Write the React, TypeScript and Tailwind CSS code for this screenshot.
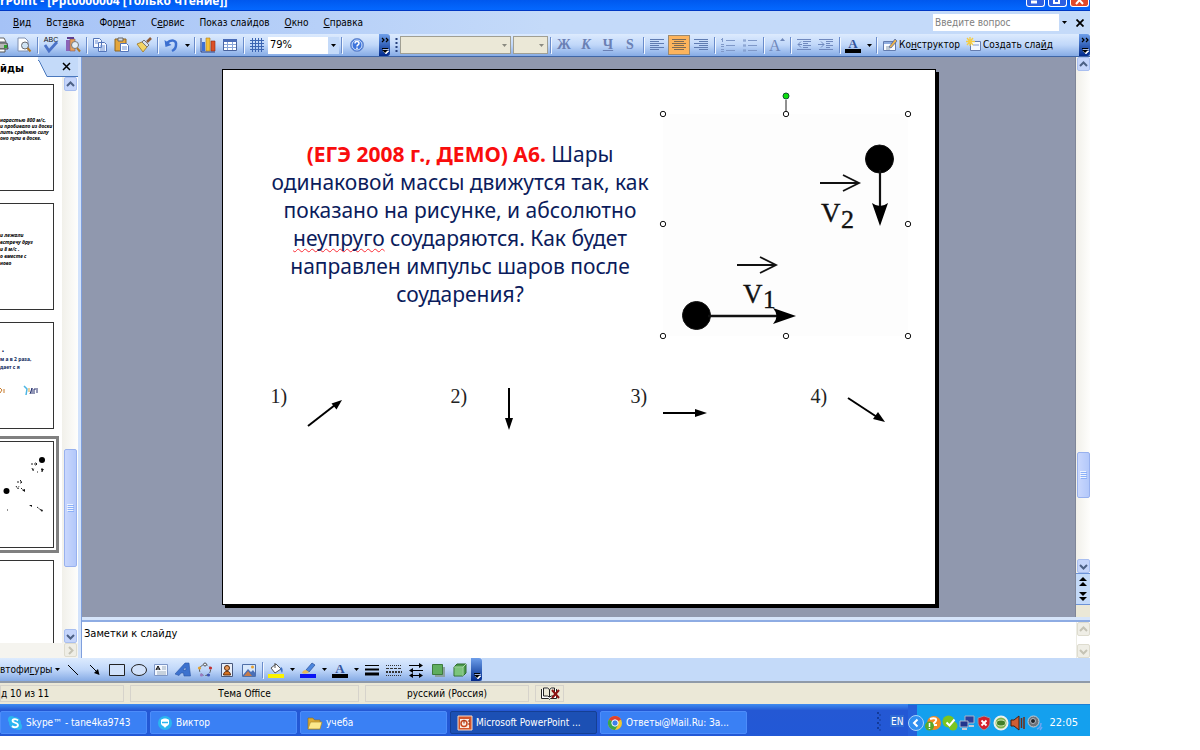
import type { ReactNode } from 'react';
import clsx from 'clsx';

const menuItems = [
    ['', 'В', 'ид'],
    ['Вст', 'а', 'вка'],
    ['Фор', 'м', 'ат'],
    ['С', 'е', 'рвис'],
    ['Показ слай', 'д', 'ов'],
    ['', 'О', 'кно'],
    ['', 'С', 'правка'],
];

const Icon = ({ children, size = 16 }: { children: ReactNode; size?: number }) => (
    <svg width={size} height={size} viewBox="0 0 16 16" fill="none" className="shrink-0" aria-hidden="true">
        {children}
    </svg>
);

const ToolButton = ({ label, active = false, children }: { label: string; active?: boolean; children: ReactNode }) => (
    <button
        aria-label={label}
        className={clsx(
            'flex h-5 w-[22px] shrink-0 items-center justify-center',
            active && 'border border-[#9c8a70] bg-[#fdb45c]'
        )}
    >
        {children}
    </button>
);

const Divider = () => (
    <span className="flex h-4 w-[5px] shrink-0 justify-center">
        <span className="w-px bg-[#6a8ccb] shadow-[1px_1px_0_#f1f7ff]" />
    </span>
);

const Caret = ({ label }: { label: string }) => (
    <button aria-label={label} className="flex h-5 w-[10px] shrink-0 items-center justify-center">
        <svg width="5" height="3" viewBox="0 0 5 3" aria-hidden="true"><path d="M0 0h5L2.5 3z" fill="#000" /></svg>
    </button>
);

const BarEnd = ({ double = false }: { double?: boolean }) => (
    <button aria-label="Параметры панели" className="flex w-[11px] shrink-0 flex-col items-center justify-end self-stretch rounded-r-[3px] bg-linear-to-b from-[#6f9fea] to-[#03298c] pb-[2px]">
        <svg width="8" height="18" viewBox="0 0 8 18" aria-hidden="true">
            {double && <path d="M1 2l2 2-2 2M5 2l2 2-2 2" stroke="#000" strokeWidth="1.2" fill="none" />}
            <path d="M2 13.500h6M2 15h6l-3 3z" stroke="#fff" strokeWidth=".6" fill="#fff" />
            <path d="M1 12.500h6" stroke="#000" />
            <path d="M1 14h6l-3 3z" fill="#000" />
        </svg>
    </button>
);

const ArrowBox = ({ dir, off = false }: { dir: 'up' | 'down' | 'right'; off?: boolean }) => (
    <button
        aria-label={dir}
        className={clsx(
            'flex h-[14px] w-[13px] shrink-0 items-center justify-center rounded-[2px] border',
            off ? 'border-[#dedccf] bg-[#efeee6]' : 'border-[#a9bff0] bg-[#c5d5fb]'
        )}
    >
        <svg width="9" height="9" viewBox="0 0 9 9" fill="none" aria-hidden="true">
            <path
                d={dir === 'up' ? 'M1 6l3.500-3.500L8 6' : dir === 'down' ? 'M1 3l3.500 3.500L8 3' : 'M3 1l3.500 3.500L3 8'}
                stroke={off ? '#c5c3b5' : '#4d6185'}
                strokeWidth="2"
            />
        </svg>
    </button>
);

const ScrollThumb = ({ className }: { className: string }) => (
    <div className={clsx('flex w-[13px] items-center justify-center rounded-[2px] border border-[#98b1ee] bg-linear-to-r from-[#c9d7fd] to-[#b3c8fa]', className)}>
        <svg width="7" height="8" viewBox="0 0 7 8" aria-hidden="true"><path d="M0 .5h6M0 2.500h6M0 4.500h6M0 6.500h6" stroke="#eef4fe" /><path d="M1 1.500h6M1 3.500h6M1 5.500h6M1 7.500h6" stroke="#8cb0f8" /></svg>
    </div>
);

const Lines = ({ d, color = '#5f7cb2' }: { d: string; color?: string }) => (
    <Icon><path d={d} stroke={color} /></Icon>
);

const ColorA = () => (
    <Icon>
        <text x="8" y="11" textAnchor="middle" fontSize="13" fontWeight="bold" fontFamily="Liberation Serif" fill="#33539b">A</text>
        <path d="M0 12h16v4H0z" fill="#000" />
    </Icon>
);

function TitleBar() {
    return (
        <header className="flex h-[11px] items-end overflow-hidden border-b border-[#0038c4] bg-linear-to-b from-[#0058ee] to-[#0468ff]">
            <h1 className="flex-1 pb-[2px] font-['Open_Sans',sans-serif] text-[12px] leading-[14px] font-bold whitespace-nowrap text-white">
                rPoint - [Ppt0000004 [Только чтение]]
            </h1>
            <div className="flex gap-[3px] self-start pr-px">
                {['Свернуть', 'Развернуть', 'Закрыть'].map((label, i) => (
                    <button
                        key={label}
                        aria-label={label}
                        className={clsx(
                            'flex h-[7px] w-[19px] justify-center rounded-b-[3px] border border-t-0 border-white',
                            i === 2 ? 'bg-[#e0492a]' : 'bg-[#2c5fe0]'
                        )}
                    >
                        <svg width="11" height="5" viewBox="0 0 11 5" fill="none" stroke="#fff" strokeWidth="2" aria-hidden="true">
                            {i === 0 && <path d="M1 2h6" strokeWidth="3" />}
                            {i === 1 && <path d="M2 0v3h5V0" />}
                            {i === 2 && <path d="M2 4l3.500-4L9 4" />}
                        </svg>
                    </button>
                ))}
            </div>
        </header>
    );
}

function MenuBar() {
    return (
        <nav className="flex h-[23px] items-center bg-linear-to-r from-[#a5c2f6] to-[#c4daf9] to-50% pl-[13px]">
            <ul className="flex flex-1 gap-[15px]">
                {menuItems.map(([before, key, after]) => (
                    <li key={before + key + after}>
                        <a href="#">{before}<u>{key}</u>{after}</a>
                    </li>
                ))}
            </ul>
            <div className="flex h-[17px] bg-white">
                <input aria-label="Вопрос" placeholder="Введите вопрос" className="w-[126px] pl-[2px] placeholder:text-[#808080]" />
                <span className="flex w-[11px] items-center bg-[#c4daf9]"><Caret label="Список вопросов" /></span>
            </div>
            <button aria-label="Закрыть окно" className="flex w-[20px] justify-center">
                <svg width="8" height="8" viewBox="0 0 8 8" aria-hidden="true"><path d="M.5.5l7 7M7.500.5l-7 7" stroke="#000" strokeWidth="1.800" /></svg>
            </button>
        </nav>
    );
}

function Toolbars() {
    return (
        <div className="flex h-[23px] border-b border-[#3f66a6] bg-[#c0d6f9]">
            <div className="flex items-center bg-linear-to-b from-[#ddebfe] via-[#c0d7f9] to-[#86abe5]">
                <button aria-label="Печать" className="flex w-[13px] justify-end overflow-hidden pr-1">
                    <Icon>
                        <path d="M3 1h8l2 4H2z" fill="#fff" stroke="#666" /><path d="M1 6h13l1 6H1z" fill="#b8b8b8" stroke="#444" /><path d="M3 12h9v3H3z" fill="#fff" stroke="#555" /><path d="M11 8h3v3h-3z" fill="#2da02d" />
                    </Icon>
                </button>
                <ToolButton label="Просмотр">
                    <Icon><path d="M2 1h7l3 3v10H2z" fill="#fff" stroke="#8090b0" /><circle cx="9" cy="8.500" r="3.500" fill="#cfe3f4" stroke="#6a6a70" /><path d="M11.500 11l3 3.500" stroke="#b07828" strokeWidth="2" /></Icon>
                </ToolButton>
                <Divider />
                <ToolButton label="Орфография">
                    <Icon><text x="8" y="5" textAnchor="middle" fontSize="7" fontFamily="Liberation Sans" fill="#111">ABC</text><path d="M2 8l4 6 8-9" stroke="#4a72c8" strokeWidth="2.800" /></Icon>
                </ToolButton>
                <ToolButton label="Справочные материалы">
                    <Icon><path d="M1 3h4v11H1z" fill="#8a62b8" /><path d="M5 2h5v12H5z" fill="#e5a05a" stroke="#8a5a60" strokeWidth=".6" /><path d="M2 1h7" stroke="#5e3f92" strokeWidth="2" /><circle cx="10" cy="8" r="3.500" fill="#e2edf6" stroke="#777" /><path d="M12 11l3 3.500" stroke="#b07828" strokeWidth="2" /></Icon>
                </ToolButton>
                <Divider />
                <ToolButton label="Копировать">
                    <Icon><path d="M1.500 1.500h6l2 2v7h-8zM6.500 5.500h6l2 2v7h-8z" fill="#f4f8ff" stroke="#5274b8" /><path d="M3 4h3M3 6h3M8 9h5M8 11h5M8 13h5" stroke="#6c90d4" /></Icon>
                </ToolButton>
                <ToolButton label="Вставить">
                    <Icon><path d="M1 2h11v12H1z" fill="#e4a63c" stroke="#8c6420" /><path d="M4 1h5v3H4z" fill="#d8dde6" stroke="#666" /><path d="M6.500 6.500h6l2 2v6h-8z" fill="#fff" stroke="#5274b8" /><path d="M8 10h5M8 12h5" stroke="#6c90d4" /></Icon>
                </ToolButton>
                <ToolButton label="Формат по образцу">
                    <Icon><path d="M1 7l5-2 5 5-4 5z" fill="#f3d465" stroke="#a8853a" /><path d="M6 5l2-2 5 5-2 2z" fill="#d9e0ec" stroke="#777" /><path d="M11 5l4-4" stroke="#8e5a35" strokeWidth="2.500" /></Icon>
                </ToolButton>
                <Divider />
                <ToolButton label="Отменить">
                    <Icon><path d="M4 6c4-4 10-3 9 2 0 3-2 5-4 6" stroke="#3c6fd0" strokeWidth="2.500" /><path d="M1.500 3l1 7 6-2z" fill="#3c6fd0" /></Icon>
                </ToolButton>
                <Caret label="Отменить список" />
                <Divider />
                <ToolButton label="Диаграмма">
                    <Icon><path d="M1 1v14h14" stroke="#2b3f85" /><path d="M2 5h3v9H2z" fill="#3c6fd8" /><path d="M6 1h4v13H6z" fill="#f2c13c" stroke="#b07a18" strokeWidth=".6" /><path d="M11 4h4v10h-4z" fill="#dd5127" stroke="#8d2c12" strokeWidth=".6" /></Icon>
                </ToolButton>
                <ToolButton label="Таблица">
                    <Icon><path d="M1.500 2.500h13v11h-13z" fill="#fff" stroke="#48629c" /><path d="M1 2h14v3H1z" fill="#4a6cb8" /><path d="M2 7.500h12M2 10.500h12M5.500 5v8M10.500 5v8" stroke="#8aa6d8" /></Icon>
                </ToolButton>
                <Divider />
                <ToolButton label="Сетка">
                    <Lines color="#3c65b2" d="M1 3.500h14M1 6.500h14M1 9.500h14M1 12.500h14M3.500 1v14M6.500 1v14M9.500 1v14M12.500 1v14" />
                </ToolButton>
                <div className="flex h-[17px] bg-white">
                    <select aria-label="Масштаб" className="w-[60px] appearance-none pl-[2px] text-[11px]"><option>79%</option></select>
                    <span className="flex w-[11px] items-center bg-[#c4daf9]"><Caret label="Масштаб список" /></span>
                </div>
                <Divider />
                <span className="w-[2px]" />
                <ToolButton label="Справка">
                    <Icon><circle cx="8" cy="8" r="6.500" fill="#3d74dc" stroke="#6f8fce" /><circle cx="8" cy="8" r="5" stroke="#dce9fc" /><path d="M6 6.500c0-3 4-2.500 4-.3C10 8 8 7.800 8 9.500M8 10.500v1.500" stroke="#fff" strokeWidth="1.500" /></Icon>
                </ToolButton>
                <span className="w-[11px]" />
                <BarEnd double />
            </div>
            <div className="flex flex-1 items-center bg-linear-to-b from-[#ddebfe] via-[#c0d7f9] to-[#86abe5]">
                <svg width="10" height="16" viewBox="0 0 10 16" className="shrink-0" aria-hidden="true"><path d="M6.500 1v15" stroke="#27417c" strokeWidth="2" strokeDasharray="2 2" /></svg>
                <div className="flex h-[18px] items-center border border-[#a09f93] bg-[#ebe8d7]">
                    <select aria-label="Шрифт" disabled className="h-4 w-[100px] appearance-none"><option></option></select>
                    <svg width="9" height="3" viewBox="0 0 9 3" aria-hidden="true"><path d="M1 0h5L3.500 3z" fill="#8a8a80" /></svg>
                </div>
                <div className="ml-[2px] flex h-[18px] items-center border border-[#a09f93] bg-[#ebe8d7]">
                    <select aria-label="Размер" disabled className="h-4 w-[24px] appearance-none"><option></option></select>
                    <svg width="9" height="3" viewBox="0 0 9 3" aria-hidden="true"><path d="M1 0h5L3.500 3z" fill="#8a8a80" /></svg>
                </div>
                <Divider />
                <div className="flex font-['Liberation_Serif',serif] text-[14px] font-bold text-[#6a80b4]">
                    <ToolButton label="Полужирный">Ж</ToolButton>
                    <ToolButton label="Курсив"><i>К</i></ToolButton>
                    <ToolButton label="Подчеркнутый"><u>Ч</u></ToolButton>
                    <ToolButton label="Тень">S</ToolButton>
                </div>
                <Divider />
                <ToolButton label="По левому краю"><Lines d="M1 2.500h14M1 4.500h9M1 6.500h14M1 8.500h9M1 10.500h14M1 12.500h9" /></ToolButton>
                <ToolButton label="По центру" active><Lines color="#7d6a55" d="M1 2.500h14M3 4.500h10M1 6.500h14M3 8.500h10M1 10.500h14M3 12.500h10" /></ToolButton>
                <ToolButton label="По правому краю"><Lines d="M1 2.500h14M6 4.500h9M1 6.500h14M6 8.500h9M1 10.500h14M6 12.500h9" /></ToolButton>
                <Divider />
                <ToolButton label="Нумерация"><Lines color="#7f98c8" d="M1 2.500h2M2.500 1v4M1 7.500h3M1 9.500h3M1 12.500h3M1 14.500h3M6 3.500h9M6 8.500h9M6 13.500h9" /></ToolButton>
                <ToolButton label="Маркеры"><Lines color="#7f98c8" d="M1 3h3M1 4h3M1 8h3M1 9h3M1 13h3M1 14h3M6 3.500h9M6 8.500h9M6 13.500h9" /></ToolButton>
                <Divider />
                <ToolButton label="Увеличить шрифт">
                    <Icon><text x="0" y="14" fontSize="16" fontFamily="Liberation Serif" fill="#7088ba">A</text><path d="M11 4l2.500-3L16 4z" fill="#7088ba" /></Icon>
                </ToolButton>
                <Divider />
                <ToolButton label="Уменьшить отступ"><Lines color="#7089be" d="M1 2.500h14M7 4.500h8M7 6.500h5M7 8.500h8M7 10.500h5M1 12.500h14M5 4.500L2 7.500l3 3M2 7.500h4" /></ToolButton>
                <ToolButton label="Увеличить отступ"><Lines color="#7089be" d="M1 2.500h14M8 4.500h7M8 6.500h4M8 8.500h7M8 10.500h4M1 12.500h14M3 4.500l3 3-3 3M0 7.500h6" /></ToolButton>
                <Divider />
                <ToolButton label="Цвет текста"><ColorA /></ToolButton>
                <Caret label="Цвет текста список" />
                <Divider />
                <button className="ml-[3px] flex shrink-0 items-center gap-px">
                    <Icon><path d="M1.500 4.500h12v9h-12z" fill="#f8fbff" stroke="#637caf" /><path d="M2 5h11v2H2z" fill="#8eacdf" /><path d="M4 10h5M4 12h4" stroke="#89a" /><path d="M7 10l6-8 2 2-6 7z" fill="#eeb34a" stroke="#3e5fa8" strokeWidth=".7" /></Icon>
                    <span>Ко<u>н</u>структор</span>
                </button>
                <button className="ml-[6px] flex shrink-0 items-center gap-px">
                    <Icon><path d="M4.500 4.500h10v9h-10z" fill="#f5f9ff" stroke="#657cae" /><path d="M7 8h6" stroke="#7f9ad0" /><path d="M4 0v9M0 4.500h9M1 1l6 7M7 1L1 8" stroke="#f5cd45" strokeWidth="1.300" /></Icon>
                    <span>Создать сла<u>й</u>д</span>
                </button>
                <span className="flex-1" />
                <BarEnd double />
            </div>
        </div>
    );
}

const thumbText = "font-['Noto_Sans',sans-serif] text-[5px] font-bold italic whitespace-nowrap text-black";

function SlidesPane() {
    return (
        <aside className="flex w-[78px] shrink-0 flex-col overflow-hidden bg-white">
            <div className="flex h-5 shrink-0 bg-[#c4daf9]">
                <span className="flex h-full w-[38px] items-center bg-white pt-1 text-[11px] font-bold">йды</span>
                <svg width="40" height="20" viewBox="0 0 40 20" className="shrink-0" aria-hidden="true">
                    <path d="M0 3h1l8 17H0z" fill="#fff" />
                    <path d="M0 3.500h1l8 16h31" fill="none" stroke="#4a78bd" />
                    <path d="M25 6l7 7M32 6l-7 7" stroke="#000" strokeWidth="1.500" />
                </svg>
            </div>
            <div className="flex min-h-0 flex-1">
                <div className="flex min-h-0 flex-1 flex-col gap-3 overflow-hidden pt-[7px] pr-2 *:h-[107px] *:shrink-0 *:overflow-hidden *:border *:border-l-0 *:border-[#333]">
                    <div className={clsx('pt-8 leading-[6px]', thumbText)}>
                        нарастью 800 м/с,<br />и пробивало из доски<br />лить среднюю силу<br />оно пули в доске.
                    </div>
                    <div className={clsx('pt-7 leading-[7px]', thumbText)}>
                        и лежали<br />встречу друг<br />и 8 м/с .<br />о вместе с<br />ново
                    </div>
                    <div className="pt-6 font-['Noto_Sans',sans-serif] text-[5px] leading-[8px] font-bold whitespace-nowrap text-[#0b1f5c]">
                        <p className="pl-[2px]">•</p>
                        <p>м а в 2 раза,</p>
                        <p>дает с я</p>
                        <svg width="44" height="12" viewBox="0 0 44 12" className="mt-[14px]" aria-hidden="true">
                            <path d="M0 3l2 2-2 3M4 4v4" stroke="#c77b2b" fill="none" /><path d="M24 1l3 3-1 6" stroke="#4db6e4" fill="none" strokeWidth="1.500" /><path d="M30 9l2-6v6M34 9V4h4M37 5v3" stroke="#26316e" fill="none" /><path d="M29 3v4" stroke="#d9a33b" />
                        </svg>
                    </div>
                    <div className="outline-[3px] outline-offset-[2px] outline-[#808080]">
                        <svg width="54" height="105" viewBox="0 0 54 105" aria-hidden="true">
                            <circle cx="42" cy="18" r="3" /><circle cx="6.500" cy="49" r="3" />
                            <path d="M31 22h6l-2-2M37 22l-2 2M32 26l1 3 1-3M37 30h1M42 26v4M17 40l5 0-2-2M22 40l-2 2M16 44l2 3 1-3M21 46l3 3M7 68h1M30 63l1 1M37 65l5 4" stroke="#222" strokeWidth="1" fill="none" strokeDasharray="2 1" />
                            <path d="M41 27h3l-2 3zM22 48l3-1v3zM40 67l3 1-1 2zM29 63h3v2z" fill="#111" />
                        </svg>
                    </div>
                    <div />
                </div>
                <div className="flex w-4 flex-col items-center bg-linear-to-r from-[#f1f0ea] to-[#fefefc]">
                    <ArrowBox dir="up" />
                    <div className="flex-[359]" />
                    <ScrollThumb className="flex-[117]" />
                    <div className="flex-[62]" />
                    <ArrowBox dir="down" />
                </div>
            </div>
            <div className="flex h-[15px] shrink-0 justify-end bg-[#f5f4ef] pr-px">
                <ArrowBox dir="right" off />
            </div>
        </aside>
    );
}

const handles = [
    [5, 24], [128, 24], [250, 24],
    [5, 134], [250, 134],
    [5, 246], [128, 246], [250, 246],
];

function Vectors() {
    return (
        <svg width="258" height="256" viewBox="0 0 258 256" fill="none" className="shrink-0" role="img" aria-label="Два шара">
            <path d="M5 24h245v222H5z" fill="#fdfdfd" />
            <path d="M128 10v12" stroke="#222" />
            <circle cx="128" cy="6" r="3" fill="#0be00b" stroke="#153" />
            {handles.map(([x, y]) => (
                <circle key={`${x}-${y}`} cx={x} cy={y} r="2.700" fill="#fff" stroke="#111" />
            ))}
            <g stroke="#111" fill="#000">
                <circle cx="221.500" cy="69" r="14" />
                <path d="M222 80v40" strokeWidth="2.200" />
                <path d="M214 113q8 6 16 0l-8 23z" stroke="none" />
                <circle cx="38.500" cy="225.500" r="14" />
                <path d="M50 226h80" strokeWidth="2.500" />
                <path d="M115 218q7 8 0 16l23-8z" stroke="none" />
                <path d="M162 93h38M185 85l16 8-16 8M79 175h38M102 167l16 8-16 8" fill="none" strokeWidth="1.800" />
            </g>
            <g fontFamily="Liberation Serif, serif" fill="#111" stroke="#111" strokeWidth=".4">
                <text x="163" y="132" fontSize="27">V</text>
                <text x="183" y="138" fontSize="26">2</text>
                <text x="85" y="213" fontSize="27">V</text>
                <text x="105" y="218" fontSize="25">1</text>
            </g>
        </svg>
    );
}

const answers = [
    { n: '1)', line: 'M20 42l27-21', head: 'M54 16l-5.500 9.500-5-6z' },
    { n: '2)', line: 'M41 4v32', head: 'M41 46l-4-12h8z' },
    { n: '3)', line: 'M15 29h34', head: 'M59 29l-12 4v-8z' },
    { n: '4)', line: 'M20 14l29 19', head: 'M57 38l-12-3 5-7z' },
];

function Slide() {
    return (
        <section className="flex aspect-[714/536] w-[714px] flex-col border border-black bg-white shadow-[3px_3px_0_#000]">
            <div className="flex pt-5">
                <p className="ml-10 w-[395px] pt-[50px] text-center font-['Noto_Sans',sans-serif] text-[21px] leading-[28px] whitespace-nowrap text-[#0b1c5c]">
                    <b className="text-[#f90d0d]">(ЕГЭ 2008 г., ДЕМО) А6.</b> Шары<br />
                    одинаковой массы движутся так, как<br />
                    показано на рисунке, и абсолютно<br />
                    <span className="underline decoration-red-500 decoration-wavy decoration-1 underline-offset-[2px] [text-decoration-skip-ink:none]">неупруго</span> соударяются. Как будет<br />
                    направлен импульс шаров после<br />
                    соударения?
                </p>
                <Vectors />
            </div>
            <ol className="mt-[38px] ml-12 flex">
                {answers.map(({ n, line, head }) => (
                    <li key={n} className="flex w-[180px] last:w-auto">
                        <span className="w-[17px] font-['Liberation_Serif',serif] text-[20px] leading-[24px] text-[#222]">{n}</span>
                        <svg width="80" height="48" viewBox="0 0 80 48" aria-hidden="true">
                            <path d={line} stroke="#000" strokeWidth="2" />
                            <path d={head} fill="#000" />
                        </svg>
                    </li>
                ))}
            </ol>
        </section>
    );
}

function Workspace() {
    return (
        <main className="flex min-w-0 flex-1 flex-col border-l border-[#7f9fdd]">
            <div className="flex min-h-0 flex-1 bg-[#9098ae]">
                <div className="flex min-w-0 flex-1 items-center justify-center overflow-hidden">
                    <Slide />
                </div>
                <div className="flex w-[15px] shrink-0 flex-col items-center border-l border-[#7f8598] bg-linear-to-r from-[#f1f0ea] to-[#fefefc]">
                    <ArrowBox dir="up" />
                    <div className="flex-[382]" />
                    <ScrollThumb className="flex-[44]" />
                    <div className="flex-[61]" />
                    <ArrowBox dir="down" />
                    <div className="flex w-full flex-col items-center justify-evenly border-t border-b border-[#6c93d8] bg-[#c4daf9]">
                        <button aria-label="Предыдущий слайд" className="h-[15px]"><svg width="8" height="10" viewBox="0 0 8 10" aria-hidden="true"><path d="M4 0l4 4H0zM4 5l4 4H0z" /></svg></button>
                        <button aria-label="Следующий слайд" className="h-[15px]"><svg width="8" height="10" viewBox="0 0 8 10" aria-hidden="true"><path d="M0 0h8L4 4zM0 5h8L4 9z" /></svg></button>
                    </div>
                    <div className="h-3 w-full bg-[#ebe8d7]" />
                </div>
            </div>
            <div className="h-[5px] border-b-2 border-[#8eace3] bg-[#d6e5fb]" />
            <div className="flex h-[36px] bg-white">
                <textarea aria-label="Заметки" defaultValue="Заметки к слайду" className="flex-1 resize-none pt-1 pl-[2px] text-[11px] leading-[16px] outline-none" />
                <div className="flex w-[14px] flex-col justify-between border-l border-[#ececE4]">
                    <ArrowBox dir="up" off />
                    <ArrowBox dir="down" off />
                </div>
            </div>
        </main>
    );
}

function DrawingBar() {
    return (
        <div className="flex h-[25px] border-b-2 border-[#8f9aa8] bg-[#c4daf9]">
            <div className="flex items-center bg-linear-to-b from-[#ddebfe] via-[#c0d7f9] to-[#86abe5]">
                <button className="flex w-[62px] items-center gap-[3px] whitespace-nowrap">
                    <span>втофи<u>г</u>уры</span>
                    <svg width="5" height="3" viewBox="0 0 5 3" className="shrink-0" aria-hidden="true"><path d="M0 0h5L2.500 3z" /></svg>
                </button>
                <ToolButton label="Линия"><Icon><path d="M3 3l10 10" stroke="#000" /></Icon></ToolButton>
                <ToolButton label="Стрелка"><Icon><path d="M3 3l7 7" stroke="#000" /><path d="M12.500 13l-1.500-6-4 4z" fill="#000" /></Icon></ToolButton>
                <ToolButton label="Прямоугольник"><Icon><path d="M.5 2.500h15v11H.5z" fill="#d2e2fa" stroke="#222" /></Icon></ToolButton>
                <ToolButton label="Овал"><Icon><ellipse cx="8" cy="8" rx="7.500" ry="5.500" fill="#d2e2fa" stroke="#222" /></Icon></ToolButton>
                <ToolButton label="Надпись">
                    <Icon><path d="M1.500 2.500h13v11h-13z" fill="#f3f8ff" stroke="#7c96c6" /><path d="M3 8l2-4 2 4M3.500 7h3" stroke="#000" /><path d="M9 5h4M9 7h4M4 10h9M4 12h9" stroke="#9ab" /></Icon>
                </ToolButton>
                <ToolButton label="WordArt"><Icon><path d="M0 12L10 1h4l1.500 13H9l-.5-3H6l-2 2.500zM8 8h3l-.5-3z" fill="#3d72ce" fillRule="evenodd" stroke="#2b55a5" strokeWidth=".6" /></Icon></ToolButton>
                <ToolButton label="Схема">
                    <Icon><circle cx="8" cy="8" r="5.500" stroke="#555" strokeDasharray="3 2" /><circle cx="8" cy="2.500" r="1.500" fill="#e8f0fc" stroke="#555" /><circle cx="13.500" cy="6" r="1.600" fill="#c03030" /><circle cx="11.500" cy="13" r="1.600" fill="#3a53b5" /><circle cx="4.500" cy="13" r="1.600" fill="#9a7ac0" /><circle cx="2.500" cy="6" r="1.600" fill="#e0a030" /></Icon>
                </ToolButton>
                <ToolButton label="Картинка">
                    <Icon><path d="M2.500 1.500h11v13h-11z" fill="#e8eef8" stroke="#48587c" /><circle cx="8" cy="6" r="2.500" fill="#e99a5a" stroke="#5b2d10" /><path d="M4.500 13c0-5 7-5 7 0z" fill="#d6701f" stroke="#5b2d10" /></Icon>
                </ToolButton>
                <ToolButton label="Рисунок">
                    <Icon><path d="M1.500 2.500h13v12h-13z" fill="#d8e8fb" stroke="#5070a8" /><path d="M2 13l5-6 3 3 2-2 3 4v2H2z" fill="#4a6fb6" /><path d="M3 14l4-5 4 5z" fill="#c87c48" /><circle cx="11.500" cy="5" r="1.500" fill="#e4a030" /></Icon>
                </ToolButton>
                <Divider />
                <ToolButton label="Цвет заливки">
                    <Icon><path d="M3 6l5-4 5 5-6 4z" fill="#fdfdfd" stroke="#555" /><path d="M7 1v5" stroke="#555" /><path d="M13 5c2 1 2 4 1 6l-2-4z" fill="#3d6fc4" /><path d="M0 12h16v4H0z" fill="#fbf300" /></Icon>
                </ToolButton>
                <Caret label="Цвет заливки список" />
                <ToolButton label="Цвет линий">
                    <Icon><path d="M6 8l6-7 3 2-6 7z" fill="#4c86de" stroke="#2a4f98" strokeWidth=".7" /><path d="M2 11c1-3 3-3 4-3l3 2c-2 2-5 2-7 1z" fill="#e8b95a" /><path d="M0 12h16v4H0z" fill="#0a14f5" /></Icon>
                </ToolButton>
                <Caret label="Цвет линий список" />
                <ToolButton label="Цвет шрифта"><ColorA /></ToolButton>
                <Caret label="Цвет шрифта список" />
                <ToolButton label="Тип линии"><Icon><path d="M1 3.500h14" stroke="#000" /><path d="M1 7.500h14" stroke="#000" strokeWidth="2" /><path d="M1 12h14" stroke="#000" strokeWidth="3" /></Icon></ToolButton>
                <ToolButton label="Тип штриха"><Icon><path d="M0 3.500h16M0 13.500h16" stroke="#333" strokeDasharray="1 1" /><path d="M0 6.500h16" stroke="#333" strokeDasharray="3 1" /><path d="M0 10h16" stroke="#333" strokeWidth="2" strokeDasharray="2 1" /></Icon></ToolButton>
                <ToolButton label="Вид стрелки"><Icon><path d="M1 3.500h11M4 8.500h11M3 13.500h10" stroke="#000" strokeWidth="1.200" /><path d="M11 1l4 2.500L11 6zM5 6L1 8.500 5 11zM5 11l-4 2.500L5 16zM11 11l4 2.500-4 2.500z" fill="#000" /></Icon></ToolButton>
                <ToolButton label="Стиль тени"><Icon><path d="M5 5h10v10H5z" fill="#8aa0a0" /><path d="M2.500 2.500h10v10h-10z" fill="#5fae5f" stroke="#3d7a3d" /></Icon></ToolButton>
                <ToolButton label="Объем"><Icon><path d="M2 5l3-3h9v9l-3 3H2z" fill="#4a9a4a" stroke="#2f6b2f" /><path d="M2.500 5.500h8v8h-8z" fill="#7cc47c" /><path d="M2 5h9l3-3M11 5v9" stroke="#c5ecc5" strokeWidth=".8" /></Icon></ToolButton>
                <BarEnd />
            </div>
        </div>
    );
}

function StatusBar() {
    return (
        <footer className="flex h-[21px] gap-[6px] bg-[#ebe8d7] py-[2px] whitespace-nowrap *:flex *:items-center *:border *:border-[#d6d3cb]">
            <span className="w-[124px] border-l-0">д 10 из 11</span>
            <span className="w-[229px] justify-center">Тема Office</span>
            <span className="w-[164px] justify-center">русский (Россия)</span>
            <span className="w-[29px] justify-center">
                <svg width="20" height="13" viewBox="0 0 20 13" fill="none" aria-hidden="true">
                    <path d="M1.500 2v9.500h7l1 1 1-1h6V2M3.500 1h4l2 1.500V10l-2-1h-4zM9.500 2.500l2-1.500h3v8h-3l-2 1" fill="#fff" stroke="#222" />
                    <path d="M12 3l7 8M19 3l-7 8" stroke="#8d1414" strokeWidth="2" />
                </svg>
            </span>
        </footer>
    );
}

const tasks = [
    { label: 'Skype™ - tane4ka9743', icon: <Icon><circle cx="8" cy="8" r="6" fill="#2bb5f0" /><circle cx="4.500" cy="4.500" r="3.500" fill="#2bb5f0" /><circle cx="11.500" cy="11.500" r="3.500" fill="#2bb5f0" /><path d="M11 5.500C9 3.500 5.500 4 5.500 6s5.500 1.500 5.500 4-4 3-6 1" stroke="#fff" strokeWidth="1.800" /></Icon> },
    { label: 'Виктор', icon: <Icon><circle cx="8" cy="8" r="7" fill="#2bb5f0" /><path d="M4 5c2-2 6-2 8 0v4c-1 2-3 2-4 4-1-2-3-2-4-4z" fill="#fff" /><path d="M5 7.500h6" stroke="#2bb5f0" strokeWidth="1.500" /></Icon> },
    { label: 'учеба', icon: <Icon><path d="M1 3h5l1.500 2H13v9H1z" fill="#d9a935" stroke="#8a6a1a" strokeWidth=".6" /><path d="M3.500 7H15l-2 7H1z" fill="#fbe88b" stroke="#b08a2a" strokeWidth=".7" /></Icon> },
    { label: 'Microsoft PowerPoint ...', active: true, icon: <Icon><path d="M1 1h14v14H1z" fill="#d3562b" stroke="#f5d9c9" /><path d="M3 4h9v9H3z" fill="#fbeee4" /><circle cx="7" cy="8.500" r="3" stroke="#c8481e" strokeWidth="1.500" /><path d="M7 8.500V5M11 6h2M11 9h2" stroke="#8b2c10" /></Icon> },
    { label: 'Ответы@Mail.Ru: За...', icon: <Icon><circle cx="8" cy="8" r="7" fill="#f2c72e" /><path d="M8 8L1.900 4.500A7 7 0 0 1 14.100 4.500z" fill="#e0402f" /><path d="M8 8L1.900 4.500A7 7 0 0 0 8 15l3-5z" fill="#3aa64a" /><circle cx="8" cy="8" r="3.200" fill="#3f7fe8" stroke="#fff" /></Icon> },
];

function Taskbar() {
    return (
        <div className="flex h-8 items-stretch bg-linear-to-b from-[#3f8cf0] via-[#2458d4] via-20% to-[#2258d6] text-white">
            <div className="flex flex-1 gap-[3px] pt-[7px] pb-[2px]">
                {tasks.map(({ label, icon, active }) => (
                    <button
                        key={label}
                        className={clsx(
                            'flex w-[147px] items-center gap-[3px] rounded-[2px] border pl-[6px] whitespace-nowrap',
                            active ? 'border-[#153f94] bg-[#1c50b4]' : 'border-[#4d8cfa] bg-[#3a80f4]'
                        )}
                    >
                        {icon}
                        <span>{label}</span>
                    </button>
                ))}
            </div>
            <svg width="5" height="20" viewBox="0 0 5 20" className="mt-2 mr-[8px]" aria-hidden="true"><path d="M1 0v20" stroke="#123a99" strokeWidth="2" strokeDasharray="2 3" /><path d="M3 2v18" stroke="#123a99" strokeDasharray="2 3" /></svg>
            <button className="my-[9px] mt-[11px] bg-[#2f6ad3] px-px">EN</button>
            <div className="ml-1 flex items-center gap-px border-t border-[#1b7fd6] bg-linear-to-r from-[#2560da] from-5% to-[#14a0ee] to-5% pt-[4px] pr-3">
                <button aria-label="Скрытые значки"><Icon><circle cx="8" cy="8" r="7.500" fill="#2f8ff0" stroke="#a9d4fb" /><path d="M9.500 4.500L6 8l3.500 3.500" stroke="#fff" strokeWidth="2" /></Icon></button>
                <Icon><circle cx="9" cy="8" r="7" fill="#f28a22" /><path d="M5 4c5-2 8 0 5 3l-3 3h5" stroke="#fff" strokeWidth="2" /><circle cx="4.500" cy="11" r="4.500" fill="#5aa82c" /><path d="M4.500 8v4M4.500 13v1" stroke="#fff" strokeWidth="1.500" /></Icon>
                <Icon><circle cx="6.500" cy="6.500" r="6" fill="#7cc520" /><circle cx="11" cy="11" r="4.500" fill="#7cc520" /><path d="M4.500 7.500l3 3 5-6" stroke="#fff" strokeWidth="2" /></Icon>
                <Icon><path d="M6 1h9v7H6z" fill="#2a3f9c" stroke="#a8b3c8" /><path d="M1 6h8v6H1z" fill="#23358c" stroke="#aab6cb" /><path d="M3 14h5M10 11h5" stroke="#c3cad6" strokeWidth="2" /></Icon>
                <Icon><path d="M8 1l6 2v4c0 4-3 7-6 8-3-1-6-4-6-8V3z" fill="#d5202c" stroke="#8b98ab" /><path d="M5.500 5.500l5 5M10.500 5.500l-5 5" stroke="#fff" strokeWidth="1.800" /></Icon>
                <Icon><circle cx="8" cy="8" r="6.500" fill="#7fb24c" stroke="#eef0ea" strokeWidth="2" /><ellipse cx="8" cy="8" rx="4.500" ry="3" fill="#417e28" stroke="#cde6b4" /></Icon>
                <Icon><path d="M1 5h3l5-4v14l-5-4H1z" fill="#cf5e34" stroke="#4a1d0d" /><path d="M11.500 3v10M14 2v12" stroke="#6e2a15" strokeWidth="1.500" /></Icon>
                <Icon><circle cx="6.500" cy="6.500" r="5.500" fill="#6d737c" stroke="#c9ced6" /><circle cx="6" cy="6" r="2.500" fill="#1f2329" stroke="#b5bac2" /><path d="M10 14c3-1 4-3 4-6M13 15l2-3" stroke="#6fa6f2" strokeWidth="1.500" /></Icon>
                <time className="pl-[5px] text-[11px]">22:05</time>
            </div>
        </div>
    );
}

export default function App() {
    return (
        <div className="h-screen bg-white pr-[110px] pb-[14px]">
            <div className="flex h-full flex-col overflow-hidden font-['DejaVu_Sans_Condensed','DejaVu_Sans',sans-serif] text-[10px] leading-[14px] text-black">
                <TitleBar />
                <MenuBar />
                <Toolbars />
                <div className="flex min-h-0 flex-1">
                    <SlidesPane />
                    <div className="w-[3px] shrink-0 bg-[#d3e3fb]" />
                    <Workspace />
                </div>
                <DrawingBar />
                <StatusBar />
                <Taskbar />
            </div>
        </div>
    );
}
